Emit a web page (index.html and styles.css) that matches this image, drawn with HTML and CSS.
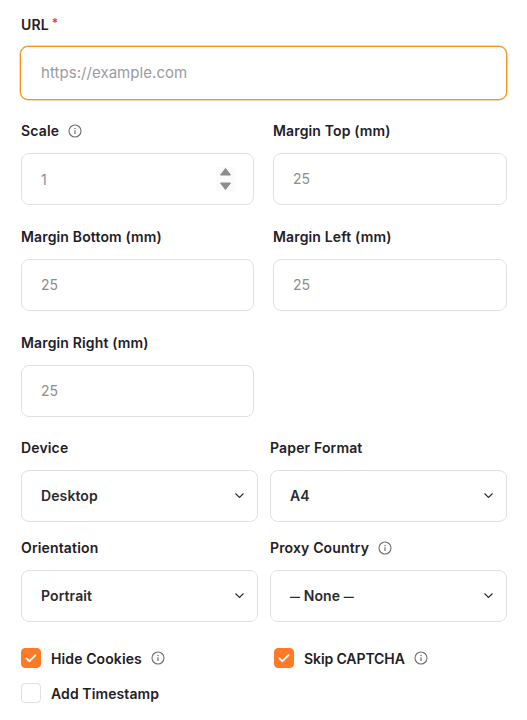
FILE: index.html
```html
<!DOCTYPE html>
<html lang="en">
<head>
<meta charset="utf-8">
<title>Screenshot options</title>
<link rel="stylesheet" href="styles.css">
</head>
<body>
<svg class="sprite" width="0" height="0" aria-hidden="true">
  <symbol id="info" viewBox="0 0 14 14"><circle cx="7" cy="7" r="6" fill="none" stroke="currentColor" stroke-width="1.1"/><path d="M7 6.300v3.600" stroke="currentColor" stroke-width="1.2" fill="none"/><circle cx="7" cy="4.400" r=".75" fill="currentColor"/></symbol>
  <symbol id="chev" viewBox="0 0 9 5"><path d="M.5.500l4 4 4-4" fill="none" stroke="currentColor" stroke-width="1.1"/></symbol>
  <symbol id="tick" viewBox="0 0 20 20"><path d="M5 10.400l3.400 3.200L15 6.800" fill="none" stroke="currentColor" stroke-width="2" stroke-linecap="round" stroke-linejoin="round"/></symbol>
</svg>
<main class="form">
  <div class="field url">
    <label class="label">URL<span class="req">*</span></label>
    <div class="box box-focus"><span class="ph">https://example.com</span></div>
  </div>
  <div class="grid grid-wide">
    <div class="field">
      <label class="label">Scale<svg class="info"><use href="#info"/></svg></label>
      <div class="box box-num"><span class="val">1</span>
        <svg class="spin" viewBox="0 0 19 24"><path d="M9.500 1.500l5 6.500h-10zM4.500 16h10l-5 6.500z" fill="currentColor" stroke="currentColor" stroke-width="1" stroke-linejoin="round"/></svg>
      </div>
    </div>
    <div class="field"><label class="label">Margin Top (mm)</label><div class="box"><span class="val">25</span></div></div>
    <div class="field"><label class="label">Margin Bottom (mm)</label><div class="box"><span class="val">25</span></div></div>
    <div class="field"><label class="label">Margin Left (mm)</label><div class="box"><span class="val">25</span></div></div>
    <div class="field"><label class="label">Margin Right (mm)</label><div class="box"><span class="val">25</span></div></div>
  </div>
  <div class="grid grid-selects">
    <div class="field"><label class="label">Device</label><div class="box box-sel"><span class="sel">Desktop</span><svg class="chev"><use href="#chev"/></svg></div></div>
    <div class="field"><label class="label">Paper Format</label><div class="box box-sel"><span class="sel">A4</span><svg class="chev"><use href="#chev"/></svg></div></div>
    <div class="field"><label class="label">Orientation</label><div class="box box-sel"><span class="sel">Portrait</span><svg class="chev"><use href="#chev"/></svg></div></div>
    <div class="field"><label class="label">Proxy Country<svg class="info"><use href="#info"/></svg></label><div class="box box-sel"><span class="sel"><span class="dash">—</span> None <span class="dash">—</span></span><svg class="chev"><use href="#chev"/></svg></div></div>
  </div>
  <div class="checks">
    <div class="check"><span class="cb cb-on"><svg class="tick"><use href="#tick"/></svg></span><span class="check-text">Hide Cookies</span><svg class="info"><use href="#info"/></svg></div>
    <div class="check"><span class="cb cb-on"><svg class="tick"><use href="#tick"/></svg></span><span class="check-text check-caps">Skip CAPTCHA</span><svg class="info"><use href="#info"/></svg></div>
    <div class="check"><span class="cb"></span><span class="check-text">Add Timestamp</span></div>
  </div>
</main>
</body>
</html>
```
FILE: styles.css
```css
* { box-sizing: border-box; }
html, body { margin: 0; background: #fff; }
body { font-family: "Inter", "Liberation Sans", sans-serif; color: #1f2026; }
.sprite { position: absolute; }
.form { padding: 13px 20px 0 21px; width: 527px; height: 720px; overflow: hidden; }
.field { display: flex; flex-direction: column; gap: 11px; }
.url { margin-bottom: 20px; }
.label { display: flex; align-items: center; height: 22px; padding-bottom: 2px; font-size: 14px; font-weight: 600; letter-spacing: .15px; }
.url .label { padding-bottom: 0; }
.req { color: #f0325a; margin-left: 3px; font-size: 12px; position: relative; top: -2px; }
.info { width: 14px; height: 14px; margin-left: 9px; color: #6f6f72; flex: none; }
.label .info { margin-top: 2px; }
.box { height: 52px; border: 1px solid #e1e1e3; border-radius: 8px; display: flex; align-items: center; padding: 0 19px 2px; background: #fff; }
.box-focus { height: 54px; margin-left: -1px; border: 1.5px solid #f7931e; box-shadow: 0 0 0 .5px #f9b262; padding-left: 20px; }
.ph { font-size: 15px; letter-spacing: .05px; color: #9b9ba3; }
.val { font-size: 14px; color: #8d8d90; }
.box-num { justify-content: space-between; padding: 0 18px 0 19px; }
.spin { width: 19px; height: 24px; color: #8c8c8c; background: #fafafa; }
.grid { display: grid; }
.grid-wide { grid-template-columns: 233px 234px; column-gap: 19px; row-gap: 21px; margin-bottom: 20px; }
.grid-selects { grid-template-columns: 237px 237px; column-gap: 12px; row-gap: 15px; margin-bottom: 26px; }
.box-sel { justify-content: space-between; padding: 0 13px 1px 19px; }
.sel { font-size: 14px; font-weight: 600; letter-spacing: .1px; color: #2a2a30; }
.dash { font-size: 10px; font-weight: 700; vertical-align: 1px; }
.chev { width: 9px; height: 5px; color: #2a2a30; }
.checks { display: grid; grid-template-columns: 253px 233px; row-gap: 15px; }
.check { display: flex; align-items: center; height: 20px; font-size: 14px; font-weight: 600; letter-spacing: .1px; }
.check-caps { letter-spacing: -.1px; }
.cb { width: 20px; height: 20px; border-radius: 4px; border: 1px solid #e1e1e3; margin-right: 10px; flex: none; display: flex; align-items: center; justify-content: center; }
.cb-on { background: #ff7a26; border-color: #ff7a26; color: #fff; }
.tick { width: 20px; height: 20px; }
```
